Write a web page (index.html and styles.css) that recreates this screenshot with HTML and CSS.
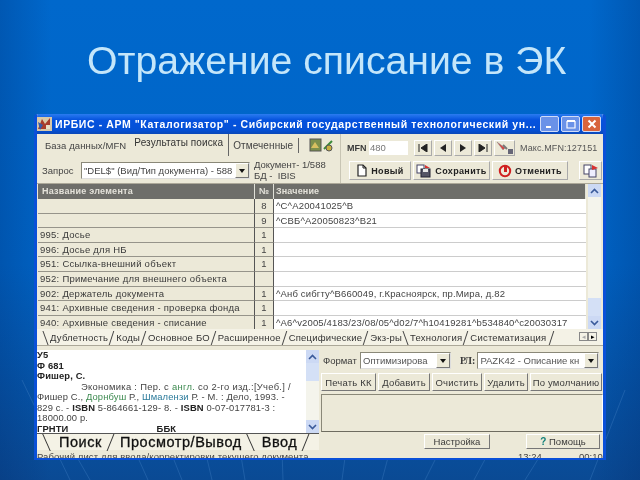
FILE: index.html
```html
<!DOCTYPE html>
<html lang="ru">
<head>
  <meta charset="UTF-8" />
  <title>Отражение списание в ЭК</title>
  <link rel="stylesheet" href="styles.css">
</head>
<body>
  <div class="slide">
    <!-- fan of thin rays in the slide background -->
    <svg class="rays" width="640" height="480" viewBox="0 0 640 480">
      <g stroke="#3f7dc0" stroke-width="1" opacity="0.4" fill="none">
        <path d="M22 380 L70 480"/><path d="M70 445 L90 480"/><path d="M130 440 L148 480"/>
        <path d="M170 450 L182 480"/><path d="M205 450 L212 480"/><path d="M240 450 L245 480"/>
        <path d="M282 450 L283 480"/><path d="M346 450 L342 480"/><path d="M390 450 L382 480"/>
        <path d="M440 450 L425 480"/><path d="M490 450 L474 480"/><path d="M550 440 L525 480"/>
        <path d="M625 390 L590 480"/>
      </g>
    </svg>

    <h1>Отражение списание в ЭК</h1>

    <div class="window">
      <!-- Title bar -->
      <div class="titlebar">
        <svg class="app-icon" width="15" height="14" viewBox="0 0 15 14"><rect width="15" height="14" fill="#d8c8a8"/><path d="M1 12 L5 2 L8 7 L13 1 L13 12 Z" fill="#a83c2c"/><path d="M1 5 L6 8 L3 13 Z" fill="#3a5aa8"/><rect x="9" y="8" width="4" height="4" fill="#e8e0c8"/></svg>
        <span class="title-text">ИРБИС - АРМ "Каталогизатор" - Сибирский государственный технологический ун...</span>
        <span class="caption-btn"><svg width="10" height="10" viewBox="0 0 10 10"><rect x="1" y="7" width="5" height="2" fill="#fff"/></svg></span>
        <span class="caption-btn"><svg width="10" height="10" viewBox="0 0 10 10"><path d="M1 2.5 H9 V9 H1 Z" fill="none" stroke="#fff" stroke-width="1.2"/><rect x="1" y="1" width="8" height="2" fill="#fff"/></svg></span>
        <span class="caption-btn close"><svg width="10" height="10" viewBox="0 0 10 10"><path d="M1.5 1.5 L8.5 8.5 M8.5 1.5 L1.5 8.5" stroke="#fff" stroke-width="2"/></svg></span>
      </div>

      <!-- Top toolbar -->
      <div class="top">
        <div class="top-left">
          <div class="tabs">
            <span class="tab first">База данных/MFN</span>
            <span class="tab active">Результаты поиска</span>
            <span class="tab marked">Отмеченные</span>
            <svg class="tab-icon" width="26" height="15" viewBox="0 0 26 15"><rect x="1" y="1" width="11" height="12" fill="#7c8f4c" stroke="#555"/><path d="M2 10 L6 4 L10 10 Z" fill="#d8c060"/><path d="M15 11 L23 3" stroke="#3a8a3a" stroke-width="2"/><circle cx="20" cy="10" r="3" fill="#c8b040" stroke="#555"/></svg>
          </div>
          <div class="query">
            <span class="query-label">Запрос</span>
            <div class="combo query-combo"><span class="combo-text">"DEL$" (Вид/Тип документа) - 588</span><span class="combo-arrow"></span></div>
            <div class="doc-info">
              <span>Документ- 1/588</span>
              <span>БД -&nbsp; IBIS</span>
            </div>
          </div>
        </div>
        <div class="top-right">
          <div class="nav-row">
            <b class="mfn-label">MFN</b>
            <span class="mfn-input">480</span>
            <div class="nav-btns">
              <span class="nav-btn"><svg width="10" height="8" viewBox="0 0 10 8"><path d="M1 0 V8 M9 0 L3 4 L9 8 Z" stroke="#222" fill="#222"/></svg></span>
              <span class="nav-btn"><svg width="10" height="8" viewBox="0 0 10 8"><path d="M8 0 L2 4 L8 8 Z" fill="#222"/></svg></span>
              <span class="nav-btn"><svg width="10" height="8" viewBox="0 0 10 8"><path d="M2 0 L8 4 L2 8 Z" fill="#222"/></svg></span>
              <span class="nav-btn"><svg width="10" height="8" viewBox="0 0 10 8"><path d="M9 0 V8 M1 0 L7 4 L1 8 Z" stroke="#222" fill="#222"/></svg></span>
            </div>
            <span class="nav-btn tool"><svg width="18" height="14" viewBox="0 0 18 14"><path d="M1 1 L9 7 L7 9 Z" fill="#d84040" stroke="#888" stroke-width=".5"/><path d="M7 4 L11 8" stroke="#777" stroke-width="2"/><rect x="12" y="8" width="5" height="5" fill="#667" /></svg></span>
            <span class="max-mfn">Макс.MFN:127151</span>
          </div>
          <div class="action-row">
            <span class="btn"><svg width="12" height="13" viewBox="0 0 12 13"><path d="M2 1 H7 L10 4 V12 H2 Z" fill="#fff" stroke="#222" stroke-width="1.2"/><path d="M7 1 V4 H10" fill="none" stroke="#222"/></svg>Новый</span>
            <span class="btn"><svg width="16" height="14" viewBox="0 0 16 14"><rect x="1" y="1" width="7" height="8" fill="#fff" stroke="#446"/><rect x="5" y="5" width="9" height="8" fill="#556" stroke="#223"/><rect x="7" y="5" width="5" height="3" fill="#e8e8e8"/><path d="M9 1 L14 4 L9 4 Z" fill="#d83030"/></svg>Сохранить</span>
            <span class="btn"><svg width="14" height="14" viewBox="0 0 14 14"><circle cx="7" cy="7" r="5.2" fill="none" stroke="#d02020" stroke-width="2"/><rect x="6" y="1" width="3" height="7" fill="#d02020"/></svg>Отменить</span>
            <span class="btn last"><svg width="16" height="14" viewBox="0 0 16 14"><rect x="1" y="1" width="7" height="9" fill="#fff" stroke="#446"/><rect x="6" y="5" width="7" height="8" fill="#eef" stroke="#446"/><path d="M9 1 L15 4 L9 6 Z" fill="#d83030"/></svg></span>
          </div>
        </div>
      </div>

      <!-- Field table -->
      <div class="grid-wrap">
        <div class="grid">
          <div class="row head"><span class="c-name">Название элемента</span><span class="c-num">№</span><span class="c-val">Значение</span></div>
          <div class="row"><span class="c-name"></span><span class="c-num">8</span><span class="c-val">^C^A20041025^B</span></div>
          <div class="row"><span class="c-name"></span><span class="c-num">9</span><span class="c-val">^CBБ^A20050823^B21</span></div>
          <div class="row"><span class="c-name">995: Досье</span><span class="c-num">1</span><span class="c-val"></span></div>
          <div class="row"><span class="c-name">996: Досье для НБ</span><span class="c-num">1</span><span class="c-val"></span></div>
          <div class="row"><span class="c-name">951: Ссылка-внешний объект</span><span class="c-num">1</span><span class="c-val"></span></div>
          <div class="row"><span class="c-name">952: Примечание для внешнего объекта</span><span class="c-num"></span><span class="c-val"></span></div>
          <div class="row"><span class="c-name">902: Держатель документа</span><span class="c-num">1</span><span class="c-val">^Анб сибгту^B660049, г.Красноярск, пр.Мира, д.82</span></div>
          <div class="row"><span class="c-name">941: Архивные сведения - проверка фонда</span><span class="c-num">1</span><span class="c-val"></span></div>
          <div class="row"><span class="c-name">940: Архивные сведения - списание</span><span class="c-num">1</span><span class="c-val">^A6^v2005/4183/23/08/05^d02/7^h10419281^b534840^c20030317</span></div>
        </div>
        <div class="scroll grid-scroll">
          <span class="sb-btn"><svg width="9" height="6" viewBox="0 0 9 6"><path d="M1 5 L4.5 1.5 L8 5" fill="none" stroke="#3a5a9a" stroke-width="1.6"/></svg></span>
          <span class="sb-track end"><span class="sb-thumb"></span></span>
          <span class="sb-btn"><svg width="9" height="6" viewBox="0 0 9 6"><path d="M1 1 L4.5 4.5 L8 1" fill="none" stroke="#3a5a9a" stroke-width="1.6"/></svg></span>
        </div>
      </div>

      <!-- Worksheet tabs -->
      <div class="sheet-tabs">
        <span class="sheet first">Дублетность</span>
        <span class="sheet">Коды</span>
        <span class="sheet">Основное БО</span>
        <span class="sheet">Расширенное</span>
        <span class="sheet">Специфические</span>
        <span class="sheet">Экз-ры</span>
        <span class="sheet back">Технология</span>
        <span class="sheet tail">Систематизация</span>
        <span class="sheet-nav"><i>◂</i><i class="dark">▸</i></span>
      </div>

      <!-- Lower part -->
      <div class="lower">
        <div class="lower-left">
          <div class="preview-wrap">
            <div class="preview">
              <b>У5</b><br>
              <b>Ф 681</b><br>
              <b>Фишер, С.</b><br>
              <span class="indent">Экономика : Пер. с <em>англ.</em> со 2-го изд.:[Учеб.] /</span><br>
              Фишер С., <em>Дорнбуш</em> Р., <span class="blue">Шмалензи</span> Р. - М. : Дело, 1993. -<br>
              829 с. - <b>ISBN</b> 5-864661-129- 8. - <b>ISBN</b> 0-07-017781-3 :<br>
              18000.00 р.<br>
              <div class="preview-last"><b>ГРНТИ</b><b>ББК</b></div>
            </div>
            <div class="scroll preview-scroll">
              <span class="sb-btn"><svg width="9" height="6" viewBox="0 0 9 6"><path d="M1 5 L4.5 1.5 L8 5" fill="none" stroke="#3a5a9a" stroke-width="1.6"/></svg></span>
              <span class="sb-track"><span class="sb-thumb"></span></span>
              <span class="sb-btn"><svg width="9" height="6" viewBox="0 0 9 6"><path d="M1 1 L4.5 4.5 L8 1" fill="none" stroke="#3a5a9a" stroke-width="1.6"/></svg></span>
            </div>
          </div>
          <div class="mode-tabs">
            <span class="mode">Поиск</span>
            <span class="mode on">Просмотр/Вывод</span>
            <span class="mode">Ввод</span>
          </div>
        </div>
        <div class="lower-right">
          <div class="format-row">
            <span class="format-label">Формат</span>
            <div class="combo format-combo"><span class="combo-text">Оптимизирова</span><span class="combo-arrow"></span></div>
            <b class="rl-label">РЛ:</b>
            <div class="combo rl-combo"><span class="combo-text">PAZK42 - Описание кн</span><span class="combo-arrow"></span></div>
          </div>
          <div class="print-row">
            <span class="pbtn w1">Печать КК</span>
            <span class="pbtn w2">Добавить</span>
            <span class="pbtn w3">Очистить</span>
            <span class="pbtn w4">Удалить</span>
            <span class="pbtn w5">По умолчанию</span>
          </div>
          <div class="sunken"></div>
          <div class="help-row">
            <span class="hbtn set">Настройка</span>
            <span class="hbtn help"><b class="q">?</b> Помощь</span>
          </div>
        </div>
      </div>

      <!-- Status bar -->
      <div class="status">
        <span class="status-main">Рабочий лист для ввода/корректировки текущего документа</span>
        <span class="status-time">13:24</span>
        <span class="status-dur">00:10</span>
      </div>
    </div>
  </div>
</body>
</html>
```

FILE: styles.css
```css
* {
  margin: 0;
  padding: 0;
  box-sizing: border-box;
}

body {
  width: 640px;
  height: 480px;
  overflow: hidden;
  font-family: "Liberation Sans", Arial, sans-serif;
}

.slide {
  position: relative;
  width: 640px;
  height: 480px;
  padding-top: 40px;
  background:
    linear-gradient(90deg, rgba(0, 30, 90, 0.22) 0%, rgba(0, 30, 90, 0) 8%, rgba(0, 30, 90, 0) 92%, rgba(0, 30, 90, 0.22) 100%),
    linear-gradient(180deg, #0068cc 0%, #0064c6 55%, #0a4a94 100%);
}

.rays {
  position: absolute;
  left: 0;
  top: 0;
}

h1 {
  position: relative;
  height: 74px;
  padding-left: 87px;
  font-size: 39.2px;
  line-height: 42px;
  font-weight: normal;
  color: #c4e6fa;
  white-space: nowrap;
  filter: blur(0.3px);
}

/* Window */
.window {
  position: relative;
  width: 572px;
  height: 346px;
  margin-left: 34px;
  overflow: hidden;
  background: #ece9d8;
  border: solid #0a50d8;
  border-width: 0 3px 2px 3px;
  border-radius: 4px 4px 0 0;
  color: #3a3a3a;
  font-size: 9.5px;
  filter: blur(0.35px);
}

.titlebar {
  height: 20px;
  display: flex;
  align-items: center;
  padding: 0 2px 0 0;
  background: linear-gradient(180deg, #2a7cf0 0%, #0553de 30%, #0450d6 80%, #0a48b8 100%);
  color: #fff;
}

.app-icon {
  margin-right: 3px;
}

.title-text {
  flex: 1;
  font-size: 10.5px;
  font-weight: bold;
  letter-spacing: 0.59px;
  white-space: nowrap;
  overflow: hidden;
}

.caption-btn {
  width: 19px;
  height: 16px;
  margin-left: 2px;
  display: flex;
  align-items: center;
  justify-content: center;
  background: #6a92e8;
  border: 1px solid #d0dcf8;
  border-radius: 2px;
}

.caption-btn.close {
  background: #d8643c;
}

/* Top toolbar */
.top {
  height: 50px;
  display: flex;
  border-bottom: 1px solid #aca899;
}

.top-left {
  width: 304px;
  border-right: 1px solid #c8c5b4;
}

.tabs {
  height: 22px;
  display: flex;
  align-items: center;
  padding-left: 8px;
  color: #444;
}

.tab {
  margin-right: 9px;
  font-size: 10px;
  letter-spacing: 0.1px;
  white-space: nowrap;
}

.tab.first {
  font-size: 9.5px;
  margin-right: 8px;
}

.tab.active {
  height: 22px;
  line-height: 17px;
  padding-right: 5px;
  margin-right: 4px;
  border-right: 1px solid #666;
  color: #333;
}

.tab.marked {
  padding-right: 5px;
  line-height: 15px;
  border-right: 1px solid #666;
  margin-right: 10px;
}

.query {
  height: 28px;
  display: flex;
  align-items: center;
  padding-left: 5px;
  color: #444;
}

.query-label {
  width: 39px;
}

.combo {
  height: 17px;
  display: flex;
  align-items: center;
  background: #fff;
  border: 1px solid #8a8878;
  border-right-color: #ddd;
  border-bottom-color: #ddd;
  overflow: hidden;
}

.combo-text {
  flex: 1;
  padding-left: 2px;
  white-space: nowrap;
  overflow: hidden;
}

.combo-arrow {
  width: 14px;
  height: 15px;
  flex: none;
  position: relative;
  background: #ece9d8;
  border: 1px solid #fff;
  border-right-color: #777;
  border-bottom-color: #777;
}

/* the little black triangle on combo buttons */
.combo-arrow::after {
  content: "";
  position: absolute;
  left: 3px;
  top: 5px;
  border: 3px solid transparent;
  border-top: 4px solid #111;
  border-bottom: 0;
}

.query-combo {
  width: 169px;
}

.doc-info {
  margin-left: 4px;
  display: flex;
  flex-direction: column;
  line-height: 11px;
  white-space: nowrap;
}

.top-right {
  flex: 1;
}

.nav-row {
  height: 26px;
  display: flex;
  align-items: center;
  padding: 2px 0 0 6px;
}

.mfn-label {
  width: 22px;
  font-size: 9px;
}

.mfn-input {
  width: 39px;
  height: 14px;
  padding-left: 1px;
  line-height: 13px;
  background: #fff;
  color: #777;
}

.nav-btns {
  display: flex;
  gap: 2px;
  margin: 0 2px 0 6px;
}

.nav-btn {
  width: 18px;
  height: 16px;
  display: flex;
  align-items: center;
  justify-content: center;
  background: #ece9d8;
  border: 1px solid #fff;
  border-right-color: #aaa;
  border-bottom-color: #aaa;
}

.nav-btn.tool {
  width: 21px;
  margin-left: 0;
}

.max-mfn {
  margin-left: 5px;
  color: #555;
  font-size: 9px;
  letter-spacing: 0.12px;
  white-space: nowrap;
}

.action-row {
  height: 23px;
  display: flex;
  align-items: flex-start;
  gap: 2px;
  padding: 1px 0 0 8px;
}

.btn {
  height: 19px;
  display: flex;
  align-items: center;
  justify-content: center;
  gap: 3px;
  font-weight: bold;
  font-size: 9px;
  letter-spacing: 0.35px;
  color: #222;
  background: #ece9d8;
  border: 1px solid #fff;
  border-right-color: #aaa;
  border-bottom-color: #aaa;
}

.btn:nth-child(1) { width: 62px; }
.btn:nth-child(2) { width: 77px; }
.btn:nth-child(3) { width: 76px; }

.btn.last {
  width: 23px;
  margin-left: 9px;
}

/* Grid */
.grid-wrap {
  height: 145px;
  display: flex;
  padding: 0 0 0 1px;
}

.grid {
  width: 548px;
  flex: none;
}

.row {
  height: 14.6px;
  display: flex;
  line-height: 13.6px;
  white-space: nowrap;
}

.row span {
  padding-left: 2px;
  border-bottom: 1px solid #96948a;
}

.c-name {
  width: 217px;
  letter-spacing: 0.25px;
  border-right: 1px solid #555;
}

.c-num {
  width: 19px;
  text-align: center;
  padding-left: 0 !important;
  color: #444;
  border-right: 1px solid #555;
}

.c-val {
  flex: 1;
  background: #fff;
  color: #444;
  letter-spacing: 0.15px;
  border-bottom-color: #ccc !important;
}

.row.head {
  height: 15px;
  line-height: 15px;
  font-weight: bold;
  color: #e4e2da;
  font-size: 9px;
  letter-spacing: 0.7px;
}

.row.head span {
  background: #6e6e6a;
  border-bottom: 0;
  color: #e4e2da;
  border-right: 1px solid #e0e0d8;
}

.row.head .c-name {
  padding-left: 4px;
}

.scroll {
  display: flex;
  flex-direction: column;
  width: 13px;
  background: #f4f4ec;
}

.grid-scroll {
  margin-left: 2px;
}

.sb-btn {
  height: 13px;
  flex: none;
  display: flex;
  align-items: center;
  justify-content: center;
  background: #ccd9f4;
}

.sb-track {
  flex: 1;
  display: flex;
  flex-direction: column;
  justify-content: flex-start;
}

.sb-track.end {
  justify-content: flex-end;
}

.sb-thumb {
  height: 18px;
  background: #d4e0f6;
}

/* Sheet tabs */
.sheet-tabs {
  height: 16px;
  display: flex;
  align-items: center;
  padding-left: 13px;
  background: #f4f2e6;
  position: relative;
}

.sheet {
  position: relative;
  margin-right: 8px;
  line-height: 13px;
  letter-spacing: 0.2px;
  white-space: nowrap;
  color: #333;
}

/* slanted edge between two tabs */
.sheet::before {
  content: "";
  position: absolute;
  left: -5px;
  top: 0;
  width: 1px;
  height: 14px;
  background: #444;
  transform: skewX(-18deg);
}

.sheet.first::before,
.sheet.back::before {
  transform: skewX(20deg);
}

.sheet.tail::after {
  content: "";
  position: absolute;
  right: -6px;
  top: 0;
  width: 1px;
  height: 14px;
  background: #444;
  transform: skewX(-18deg);
}

.sheet-nav {
  position: absolute;
  right: 6px;
  top: 3px;
  display: flex;
}

.sheet-nav i {
  width: 9px;
  height: 9px;
  font-style: normal;
  font-size: 7px;
  line-height: 8px;
  text-align: center;
  color: #aaa;
  border: 1px solid #888;
}

.sheet-nav i.dark {
  color: #000;
}

/* Lower part */
.lower {
  height: 104px;
  display: flex;
  border-top: 1px solid #aca899;
}

.lower-left {
  width: 282px;
  flex: none;
  display: flex;
  flex-direction: column;
}

.preview-wrap {
  height: 83px;
  margin-top: 4px;
  display: flex;
  background: #fff;
}

.preview {
  flex: 1;
  padding: 0;
  font-size: 9.4px;
  line-height: 10.5px;
  letter-spacing: 0.14px;
  color: #444;
  white-space: nowrap;
  overflow: hidden;
}

.preview b {
  color: #222;
}

.preview em {
  font-style: normal;
  color: #3d8a50;
}

.preview .blue {
  color: #2a7a9a;
}

.indent {
  padding-left: 44px;
  letter-spacing: 0.3px;
}

.preview-last {
  display: flex;
  gap: 88px;
}

.preview-scroll {
  flex: none;
}

.mode-tabs {
  height: 17px;
  display: flex;
  align-items: flex-start;
  padding-left: 22px;
  background: #f4f2e6;
  border-top: 1px solid #555;
}

.mode {
  position: relative;
  margin-right: 20px;
  font-size: 14.5px;
  line-height: 16px;
  letter-spacing: 0.55px;
  color: #111;
  -webkit-text-stroke: 0.3px #111;
  white-space: nowrap;
}

.mode.on {
  margin-left: -2px;
}

/* slanted tab edge on the right side of every mode tab */
.mode::after {
  content: "";
  position: absolute;
  right: -9px;
  top: 0;
  width: 1px;
  height: 17px;
  background: #333;
  transform: skewX(-22deg);
}

.mode:first-child::before {
  content: "";
  position: absolute;
  left: -13px;
  top: 0;
  width: 1px;
  height: 17px;
  background: #333;
  transform: skewX(24deg);
}

.mode.on::after {
  transform: skewX(24deg);
}

.lower-right {
  flex: 1;
  padding-left: 2px;
  display: flex;
  flex-direction: column;
  background: #ece9d8;
}

.format-row {
  height: 27px;
  padding-top: 3px;
  display: flex;
  align-items: center;
}

.format-label {
  width: 39px;
  padding-left: 2px;
}

.format-combo {
  width: 91px;
  color: #555;
}

.rl-label {
  margin: 0 2px 0 9px;
  font-family: "Liberation Serif", serif;
  font-size: 10px;
}

.rl-combo {
  width: 122px;
  color: #555;
}

.print-row {
  height: 19px;
  display: flex;
  gap: 2px;
}

.pbtn {
  height: 18px;
  line-height: 17px;
  text-align: center;
  white-space: nowrap;
  letter-spacing: 0.2px;
  background: #ece9d8;
  border: 1px solid #fff;
  border-right-color: #777;
  border-bottom-color: #777;
}

.w1 { width: 55px; }
.w2 { width: 52px; }
.w3 { width: 50px; }
.w4 { width: 44px; }
.w5 { width: 72px; }

.sunken {
  height: 38px;
  margin-top: 3px;
  border: 1px solid #8a8878;
  border-right-color: #fff;
  border-bottom-color: #6e6c60;
}

.help-row {
  height: 17px;
  display: flex;
  padding-top: 2px;
}

.hbtn {
  height: 15px;
  line-height: 14px;
  text-align: center;
  background: #ece9d8;
  border: 1px solid #fff;
  border-right-color: #777;
  border-bottom-color: #777;
}

.hbtn.set {
  width: 66px;
  margin-left: 103px;
}

.hbtn.help {
  width: 74px;
  margin-left: 36px;
}

.q {
  color: #12807a;
  font-size: 10px;
}

/* Status bar */
.status {
  height: 10px;
  display: flex;
  align-items: flex-start;
  padding-top: 2px;
  white-space: nowrap;
  line-height: 11px;
  color: #444;
}

.status-main {
  width: 481px;
  letter-spacing: 0.1px;
}

.status-time {
  width: 61px;
}
```
